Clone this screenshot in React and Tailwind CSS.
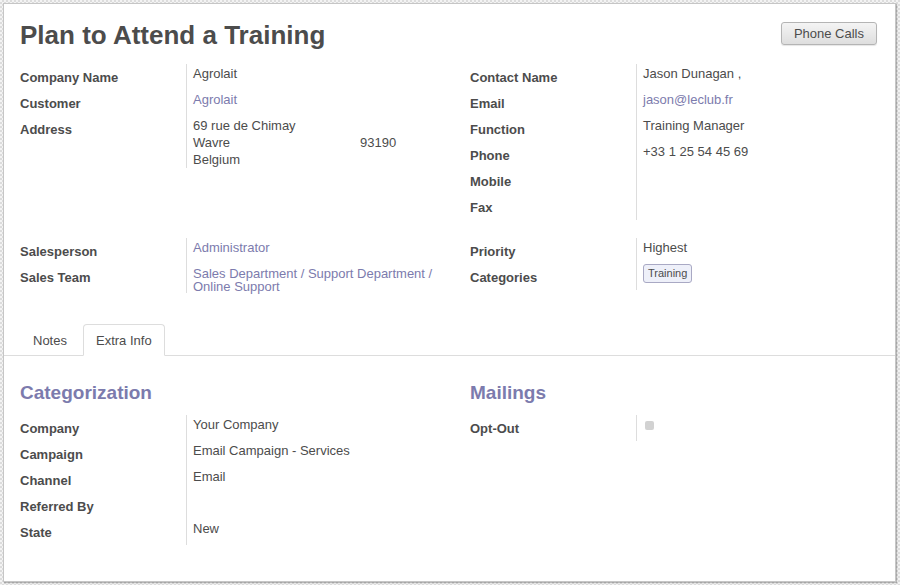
// App.jsx — lead form sheet
const Field = ({ label, children, valueClass = 'pt-px' }) => (
  <div className="flex">
    <div className="w-[166px] shrink-0 pt-[5px] pb-[4px] font-bold leading-[17px]">
      {label}
    </div>
    <div className={`flex-1 border-l border-[#dddddd] pl-[6px] leading-[17px] ${valueClass}`}>
      {children}
    </div>
  </div>
);

const Link = ({ children }) => <span className="text-[#7c7bad]">{children}</span>;

export default function App() {
  return (
    <div className="min-h-screen p-[3px] bg-[image:repeating-conic-gradient(#dcdcdc_0%_25%,#f3f3f3_0%_50%)] bg-[length:4px_4px] font-['Liberation_Sans',Arial,sans-serif] text-[13px] text-[#4c4c4c]">
      <div className="h-[579px] w-[893px] border border-[#c6c6c6] bg-white px-[16px] pt-[16px] shadow-[1px_1px_1px_rgba(0,0,0,0.25)]">
        {/* Header */}
        <div className="flex h-[44px] items-start justify-between">
          <h1 className="text-[26px] font-bold leading-[30px]">Plan to Attend a Training</h1>
          <button className="mr-[2px] mt-[2px] h-[23px] rounded-[3px] border border-[#b4b4b4] bg-gradient-to-b from-[#f4f4f4] to-[#dedede] px-[12px] leading-[21px] text-[#4c4c4c] shadow-[0_1px_1px_rgba(0,0,0,0.1)]">
            Phone Calls
          </button>
        </div>

        {/* Group 1 */}
        <div className="grid grid-cols-[450px_1fr] items-start">
          <div>
            <Field label="Company Name">Agrolait</Field>
            <Field label="Customer">
              <Link>Agrolait</Link>
            </Field>
            <Field label="Address">
              <div>69 rue de Chimay</div>
              <div className="flex">
                <span className="w-[167px]">Wavre</span>
                <span>93190</span>
              </div>
              <div>Belgium</div>
            </Field>
          </div>
          <div>
            <Field label="Contact Name">Jason Dunagan ,</Field>
            <Field label="Email">
              <Link>jason@leclub.fr</Link>
            </Field>
            <Field label="Function">Training Manager</Field>
            <Field label="Phone">+33 1 25 54 45 69</Field>
            <Field label="Mobile"></Field>
            <Field label="Fax"></Field>
          </div>
        </div>

        {/* Group 2 */}
        <div className="mt-[18px] grid grid-cols-[450px_1fr] items-start">
          <div>
            <Field label="Salesperson">
              <Link>Administrator</Link>
            </Field>
            <Field label="Sales Team" valueClass="pt-[3px] !leading-[13px]">
              <Link>
                Sales Department / Support Department /<br />
                Online Support
              </Link>
            </Field>
          </div>
          <div>
            <Field label="Priority">Highest</Field>
            <Field label="Categories" valueClass="pt-0">
              <span className="inline-block h-[19px] rounded-[3px] border border-[#a9a9c4] bg-[#eef0f9] px-[4px] text-[11px] leading-[17px]">
                Training
              </span>
            </Field>
          </div>
        </div>

        {/* Tabs */}
        <div className="-mx-[16px] mt-[31px] flex border-b border-[#dddddd] px-[16px]">
          <div className="mr-[3px] border border-b-0 border-transparent px-[12px] pb-[6px] pt-[7px] leading-[17px]">
            Notes
          </div>
          <div className="-mb-px rounded-t-[4px] border border-[#dddddd] border-b-white bg-white px-[12px] pb-[6px] pt-[7px] leading-[17px]">
            Extra Info
          </div>
        </div>

        <div className="grid grid-cols-[450px_1fr] items-start pt-[25px]">
          <div>
            <h2 className="mb-[10px] h-[24px] text-[19px] font-bold leading-[24px] text-[#7c7bad]">
              Categorization
            </h2>
            <Field label="Company">Your Company</Field>
            <Field label="Campaign">Email Campaign - Services</Field>
            <Field label="Channel">Email</Field>
            <Field label="Referred By"></Field>
            <Field label="State">New</Field>
          </div>
          <div>
            <h2 className="mb-[10px] h-[24px] text-[19px] font-bold leading-[24px] text-[#7c7bad]">
              Mailings
            </h2>
            <Field label="Opt-Out" valueClass="pt-[6px] pl-[8px]">
              <span className="block h-[9px] w-[9px] rounded-[2px] bg-[#d2d2d2]"></span>
            </Field>
          </div>
        </div>
      </div>
    </div>
  );
}
